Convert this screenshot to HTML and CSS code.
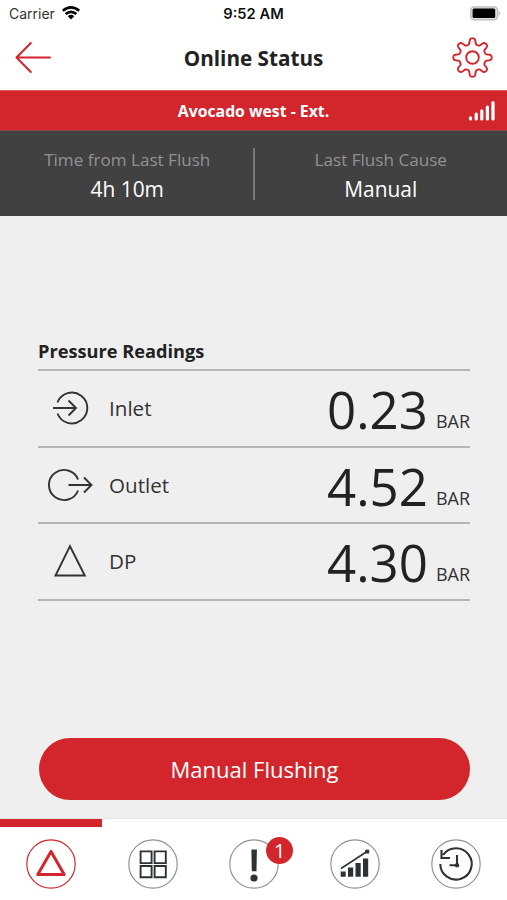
FILE: index.html
```html
<!DOCTYPE html>
<html lang="en">
<head>
<meta charset="utf-8">
<title>Online Status</title>
<link rel="stylesheet" href="styles.css">
</head>
<body>
<div class="app">
  <div class="statusbar">
    <div class="carrier"><span>Carrier</span>
      <svg width="20" height="16" viewBox="0 0 20 16" fill="none" stroke="#000" stroke-width="2.6"><path d="M1.8 5.8Q10-1 18.2 5.8M4.6 9Q10 4.6 15.4 9"/><path d="M6.8 11.2Q10 8.4 13.2 11.2L10 14.4Z" fill="#000" stroke="none"/></svg>
    </div>
    <div class="time">9:52 AM</div>
    <svg class="battery" width="31" height="15" viewBox="0 0 31 15"><rect x=".7" y=".9" width="27" height="13" rx="3.5" fill="#ddd" stroke="#bbb" stroke-width="1.3"/><rect x="2.6" y="2.6" width="22.6" height="9.4" rx="1.5"/><path d="M29 5.2Q31 7.4 29 9.6Z" fill="#aaa"/></svg>
  </div>
  <header class="header">
    <svg width="38" height="34" viewBox="0 0 38 34" fill="none" stroke="#d2262c" stroke-width="2" stroke-linecap="round" stroke-linejoin="round"><path d="M37 16.5H3.5M17.8 2L3.5 16.5L17.8 31"/></svg>
    <h1>Online Status</h1>
    <svg width="42" height="42" viewBox="-20.5 -20.5 42 42" fill="none" stroke="#d2262c" stroke-width="1.9" stroke-linejoin="round"><circle r="6.3"/><path id="gear" d=""/></svg>
  </header>
  <div class="device"><span>Avocado west - Ext.</span>
    <svg width="27" height="22" viewBox="0 0 27 22" stroke="#fff" stroke-width="3.2" stroke-linecap="round" fill="none"><path d="M2.5 17.8V19M8.2 14V19M13.8 10.8V19M19.4 7V19M25 2.5V19"/></svg>
  </div>
  <section class="summary">
    <div class="fact"><span class="label">Time from Last Flush</span><span class="value">4h 10m</span></div>
    <div class="divider"></div>
    <div class="fact"><span class="label">Last Flush Cause</span><span class="value">Manual</span></div>
  </section>
  <main class="main">
    <h2>Pressure Readings</h2>
    <div class="row">
      <svg width="48" height="36" viewBox="0 0 48 36"><path d="M9.5 12.5A15.4 15.4 0 1 1 9.5 23.5M5 18H28M20.5 10.5L28 18L20.5 25.5"/></svg>
      <span class="name">Inlet</span><span class="num">0.23</span><span class="unit">BAR</span>
    </div>
    <div class="row">
      <svg width="48" height="36" viewBox="0 0 48 36"><path d="M30.1 12.5A15.1 15.1 0 1 0 30.1 23.5M20.5 18H43.5M36 10.5L43.5 18L36 25.5"/></svg>
      <span class="name">Outlet</span><span class="num">4.52</span><span class="unit">BAR</span>
    </div>
    <div class="row">
      <svg width="48" height="36" viewBox="0 0 48 36"><path d="M22 3.2L36.8 32.5H7.5Z"/></svg>
      <span class="name">DP</span><span class="num">4.30</span><span class="unit">BAR</span>
    </div>
  </main>
  <button class="flush">Manual Flushing</button>
  <nav class="tabs">
    <a class="tab active"><svg width="50" height="50" viewBox="-25 -25 50 50"><circle class="ring" r="24.2"/><path d="M0-12.6L13.2 10.6H-13.2Z" fill="none" stroke="#d2262c" stroke-width="3" stroke-linejoin="round"/></svg></a>
    <a class="tab"><svg width="50" height="50" viewBox="-25 -25 50 50"><circle class="ring" r="24.2"/><path d="M-12.4-12.6H-1.4V-.9H-12.4ZM1.6-12.6H12.8V-.9H1.6ZM-12.4 2H-1.4V13.2H-12.4ZM1.6 2H12.8V13.2H1.6Z" fill="none" stroke="#2d3235" stroke-width="1.9"/></svg></a>
    <a class="tab"><svg width="50" height="50" viewBox="-25 -25 50 50"><circle class="ring" r="24.2"/><path d="M-2.6-14.5H2.9L2.5 7.3H-2.2Z" fill="#2d3235"/><circle cy="14" r="3.6" fill="#2d3235"/></svg><span class="badge">1</span></a>
    <a class="tab"><svg width="50" height="50" viewBox="-25 -25 50 50"><circle class="ring" r="24.2"/><path d="M-14.3 7.5H-9.3V12.8H-14.3ZM-7 3.5H-1.8V12.8H-7ZM.5-1H5.7V12.8H.5ZM8-5.5H13.2V12.8H8Z" fill="#2d3235"/><path d="M-14 4.5L12-12.5" stroke="#2d3235" stroke-width="1.5"/><path d="M10.2-14.3H14.2V-10.5H10.2Z" fill="#2d3235"/></svg></a>
    <a class="tab"><svg width="50" height="50" viewBox="-25 -25 50 50"><circle class="ring" r="24.2"/><path d="M-15.7 0A15.7 15.7 0 1 0-12.8-9.2M-14.5-14V-6H-6M1-9V1.3H-6.5" fill="none" stroke="#2d3235" stroke-width="2.1"/><circle cx="1" cy="1.3" r="2.2" fill="#2d3235"/></svg></a>
  </nav>
</div>
<script src="gear.js"></script>
</body>
</html>
```
FILE: gear.js
```js
// Eight-toothed cog outline with narrow tooth tips and wide curved valleys.
const points = [];
for (let i = 0; i < 320; i++) {
  const angle = i * Math.PI / 160;
  const radius = 16.3 + 2.9 * Math.tanh(2 * (Math.cos(8 * angle) - 0.12)) / Math.tanh(1.8);
  points.push((radius * Math.sin(angle)).toFixed(2) + " " + (-radius * Math.cos(angle)).toFixed(2));
}
document.getElementById("gear").setAttribute("d", "M" + points.join("L") + "Z");
```
FILE: styles.css
```css
* { box-sizing: border-box; }
body { margin: 0; font-family: "Open Sans", sans-serif; color: #222; }
svg { display: block; flex: none; }
h1, h2 { margin: 0; font-weight: 700; }
.app { width: 507px; height: 900px; display: flex; flex-direction: column; background: #efefef; overflow: hidden; }
.statusbar { height: 28px; background: #fff; display: grid; grid-template-columns: 1fr auto 1fr; align-items: center; padding: 0 6px 2px 9px; font-family: Inter, sans-serif; font-size: 14px; }
.carrier { display: flex; align-items: center; gap: 6px; color: #333; }
.time { font-weight: 600; font-size: 14.7px; color: #111; margin: 2px 3px 0 0; }
.battery { justify-self: end; }
.header { height: 62px; background: #fff; display: flex; justify-content: space-between; align-items: center; padding: 0 13px 3px; }
h1 { font-size: 20.7px; margin-left: 4px; }
.device { height: 41px; border-top: 1px solid #e25b60; border-bottom: 1px solid #85484a; background: #d2262c; color: #fff; display: grid; grid-template-columns: 1fr auto 1fr; align-items: center; font-size: 15.8px; font-weight: 700; padding: 0 12px; }
.device span { grid-column: 2; }
.device svg { justify-self: end; }
.summary { height: 85px; background: #414142; display: grid; grid-template-columns: 1fr 2px 1fr; padding: 17px 0; }
.fact { display: flex; flex-direction: column; align-items: center; }
.fact:first-child { padding-left: 2px; }
.divider { height: 52px; background: #78787a; }
.label { font-size: 17.1px; line-height: 23px; color: #929294; }
.value { font-size: 20.9px; line-height: 36px; color: #fff; }
.main { padding: 120px 37px 0 38px; height: 522px; }
h2 { font-size: 18.2px; line-height: 30px; height: 35px; border-bottom: 2px solid #b5b5b5; }
.row { height: 76.6px; border-bottom: 2px solid #b5b5b5; display: flex; align-items: center; padding: 0 0 0 10px; }
.row path { fill: none; stroke: #333; stroke-width: 1.9; }
.name { font-size: 20.6px; margin-left: 13px; flex: 1; color: #333; }
.num { font-size: 51px; line-height: 72px; padding-top: 2px; }
.unit { font-size: 18px; line-height: 24px; margin: 26px 0 0 8px; color: #333; }
.flush { width: 431px; height: 62px; margin: 0 0 0 39px; border: 0; border-radius: 31px; background: #d2262c; color: #fff; font: 22px "Open Sans", sans-serif; flex: none; }
.tabs { margin-top: auto; height: 82px; background: #fff; border-top: 1px solid #e4e4e4; display: grid; grid-template-columns: 102px repeat(4, 1fr); }
.tab { position: relative; display: flex; justify-content: center; padding-top: 11.5px; border-top: 8px solid transparent; }
.tab.active { border-color: #d2262c; }
.ring { fill: #fff; stroke: #919394; stroke-width: 1.2; }
.active .ring { stroke: #d2262c; }
.badge { position: absolute; left: 63px; top: 10px; width: 27px; height: 27px; border-radius: 50%; background: #d2262c; color: #fff; font-size: 20px; line-height: 27px; text-align: center; }
```
